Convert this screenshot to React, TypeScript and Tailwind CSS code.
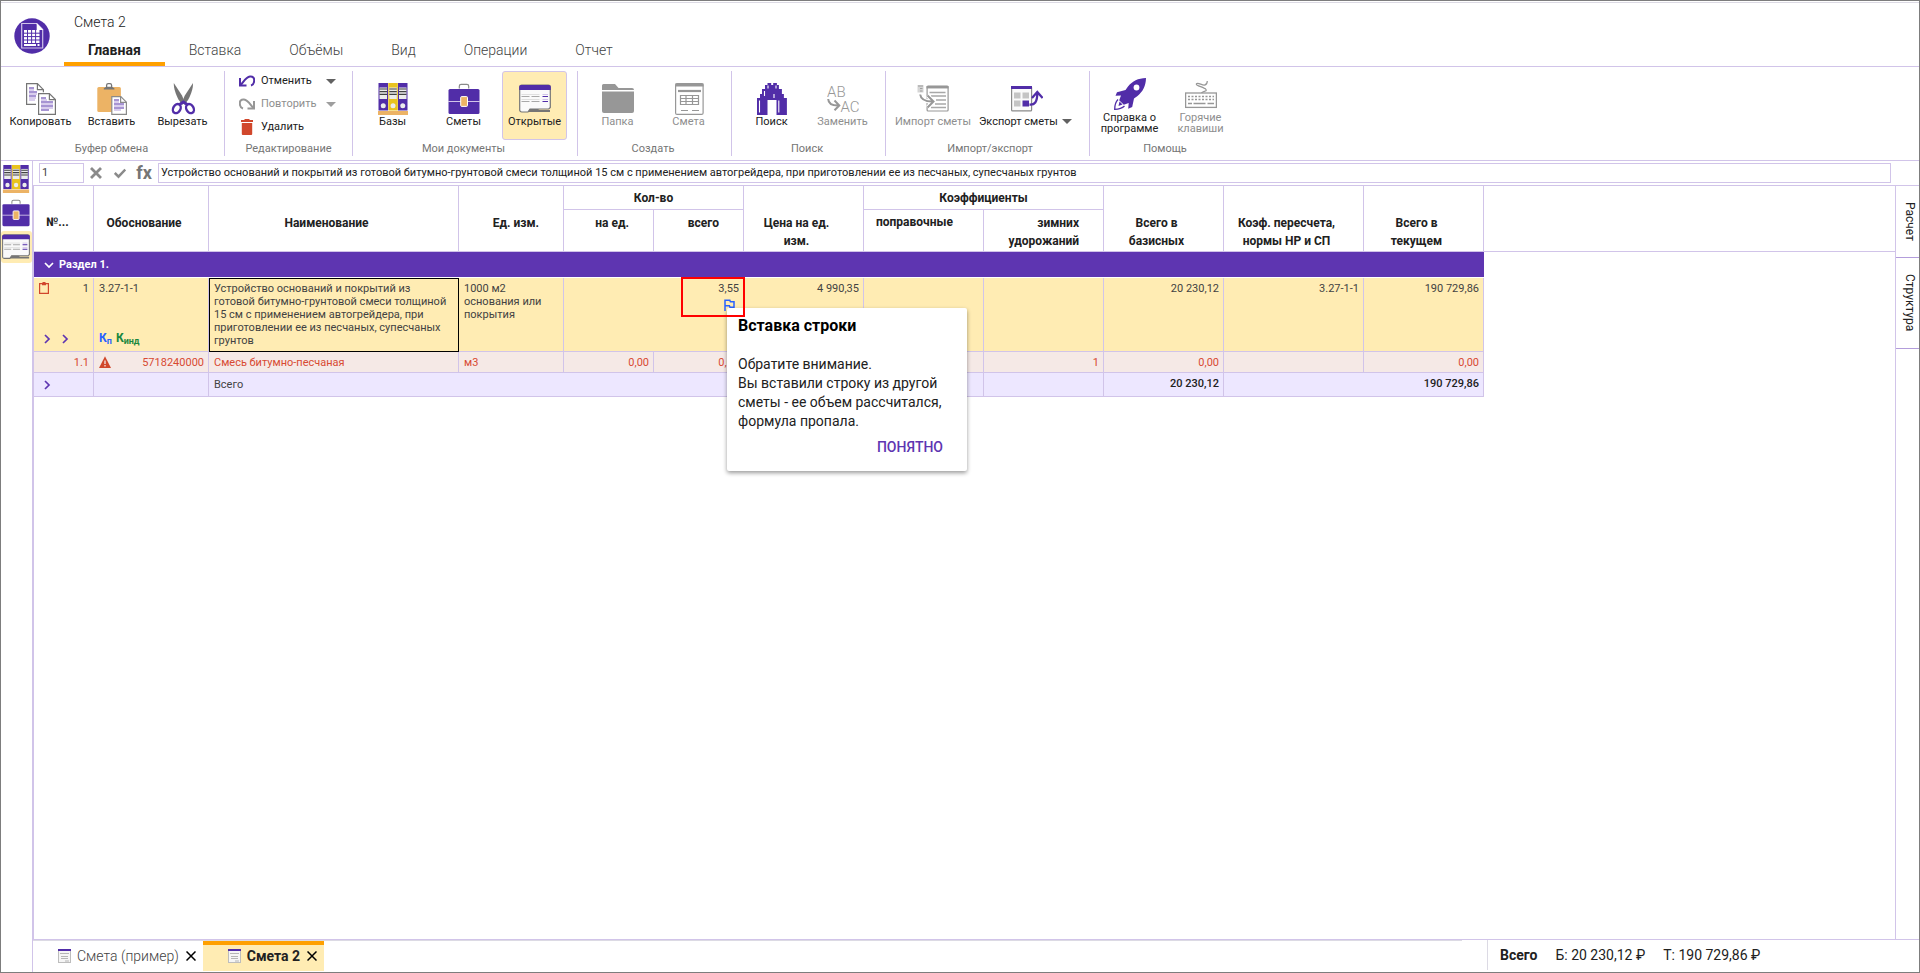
import { useState } from "react";
import type { ReactNode } from "react";
import clsx from "clsx";

const menuTabs = ["Главная", "Вставка", "Объёмы", "Вид", "Операции", "Отчет"];

const rowName =
  "Устройство оснований и покрытий из готовой битумно-грунтовой смеси толщиной 15 см с применением автогрейдера, при приготовлении ее из песчаных, супесчаных грунтов";

const columnWidths = [60, 115, 250, 105, 90, 90, 120, 120, 120, 120, 140, 120];

function LogoIcon() {
  return (
    <svg viewBox="0 0 36 36" className="size-9">
      <circle cx="18" cy="18" r="17.7" fill="#512da8" />
      <path d="M7.7 5.5h15l6 6v18.5h-21z" fill="none" stroke="#d1c4e9" strokeWidth="1.2" />
      <path d="M22.7 5l6.5 7h-6.5z" fill="#fff" />
      <rect x="10" y="12" width="15.5" height="13" fill="#fff" />
      <path
        d="M10 15.2h16M10 18.6h16M10 22h16M13.5 12v13M17.6 12v13M21.6 12v13"
        stroke="#512da8"
        strokeWidth="1"
      />
      <path d="M10 27h12M23.5 27h2" stroke="#fff" strokeWidth="2" />
    </svg>
  );
}

function CopyIcon() {
  return (
    <svg viewBox="0 0 32 32" className="size-8" fill="none">
      <path d="M11 21.3H1.6V.7h10.8l6 6v2.5" stroke="#757575" strokeWidth="1.2" />
      <path d="M12.4.7v6h6" stroke="#757575" strokeWidth="1.2" />
      <path d="M4 5h5M4 9h8M4 13h7" stroke="#512da8" strokeWidth="1.2" />
      <path d="M4 7h5M4 11h8M4 15h7M4 17h6" stroke="#b39ddb" strokeWidth="1.2" />
      <path d="M13.6 10.6h10.8l6 6v14.8H13.6z" fill="#fff" stroke="#757575" strokeWidth="1.2" />
      <path d="M24.4 10.6v6h6" stroke="#757575" strokeWidth="1.2" />
      <path d="M16 15h5M16 19h12M16 23h12M16 27h8" stroke="#512da8" strokeWidth="1.2" />
      <path d="M16 17h6M16 21h12M16 25h12" stroke="#b39ddb" strokeWidth="1.2" />
    </svg>
  );
}

function PasteIcon() {
  return (
    <svg viewBox="0 0 32 32" className="size-8" fill="none">
      <rect x="1.3" y="4" width="23.6" height="25" rx="1.5" fill="#ecb365" />
      <path d="M7.8 6.5V5.2l2.6-1.4h5.4l2.6 1.4v1.3z" fill="#757575" />
      <path d="M10.6 4.5V2.2A1.6 1.6 0 0 1 12.2.7h1.8a1.6 1.6 0 0 1 1.6 1.5v2.3" stroke="#757575" strokeWidth="1.3" />
      <path d="M15.8 13.6h9l5.6 5.6v12.2H15.8z" fill="#fff" stroke="#8a8a8a" strokeWidth="1.2" />
      <path d="M24.6 13.6v5.8h5.8" stroke="#8a8a8a" strokeWidth="1.2" />
      <path d="M18 17h5M18 21h10M18 25h10" stroke="#512da8" strokeWidth="1.2" />
      <path d="M18 19h5M18 23h10M18 27h7" stroke="#b39ddb" strokeWidth="1.2" />
    </svg>
  );
}

function CutIcon() {
  return (
    <svg viewBox="0 0 32 32" className="size-8" fill="none">
      <path d="M6.8 0l8.2 12.6 2.8 6.5-2.4 2.6-3.8-5C9.2 12 6.6 6 6.8 0z" fill="#757575" />
      <path d="M26 0l-8.2 12.6-2.8 6.5 2.4 2.6 3.8-5C23.6 12 26.2 6 26 0z" fill="#757575" />
      <ellipse cx="9.8" cy="25.6" rx="3.6" ry="4.8" transform="rotate(30 9.8 25.6)" stroke="#512da8" strokeWidth="2.4" />
      <ellipse cx="23" cy="25.6" rx="3.6" ry="4.8" transform="rotate(-30 23 25.6)" stroke="#512da8" strokeWidth="2.4" />
      <path d="M12.5 21.5l3.9-2.5 3.9 2.5" stroke="#512da8" strokeWidth="2.8" />
    </svg>
  );
}

function BooksIcon({ className = "size-8" }: { className?: string }) {
  return (
    <svg viewBox="0 0 32 32" className={className}>
      <rect x="1" y="28" width="30" height="4" fill="#ecb365" />
      <rect x="1.5" y="0" width="9.5" height="27.5" fill="#512da8" />
      <rect x="11.3" y="0" width="9.5" height="27.5" fill="#e9c31f" />
      <rect x="21" y="0" width="9.5" height="27.5" fill="#512da8" />
      {[2.5, 12.3, 22].map((x) => (
        <g key={x}>
          <rect x={x} y="4.5" width="7.5" height="11.5" fill="#ececec" />
          <path d={`M${x} 6h7.5M${x} 8.7h7.5M${x} 11.4h7.5`} stroke="#424242" strokeWidth="1.2" />
          <circle cx={x + 3.75} cy="22.8" r="2.5" fill="#ececec" />
        </g>
      ))}
    </svg>
  );
}

function CaseIcon({ className = "size-8" }: { className?: string }) {
  return (
    <svg viewBox="0 0 32 32" className={className} fill="none">
      <path d="M11.3 5.5V3.2a1.8 1.8 0 0 1 1.8-1.8h5.8a1.8 1.8 0 0 1 1.8 1.8v2.3" stroke="#8a8a8a" strokeWidth="1.2" />
      <rect x=".5" y="6" width="31" height="25" rx="1.5" fill="#512da8" />
      <path d="M0 18.5h32" stroke="#d1c4e9" strokeWidth="1" />
      <rect x="12.7" y="13.6" width="6.8" height="9.8" rx="1" fill="#ecb365" stroke="#fff" />
    </svg>
  );
}

function OpenIcon({ className = "size-8" }: { className?: string }) {
  return (
    <svg viewBox="0 0 32 32" className={className} fill="none">
      <path
        d="M.7 4a2 2 0 0 1 2-2h26.6a2 2 0 0 1 2 2v20.5l-1.5 1.5H11l-2 3H2.7a2 2 0 0 1-2-2z"
        fill="#fafafa"
        stroke="#757575"
        strokeWidth="1.2"
      />
      <path d="M.2 7V4a2 2 0 0 1 2-2h27.6a2 2 0 0 1 2 2v3z" fill="#512da8" />
      <path d="M2.5 13.5h8M12.5 13.5h8M2.5 18.5h8M12.5 18.5h8" stroke="#a8a8a8" strokeWidth="1.2" />
      <path d="M2.5 11.5h18M2.5 16.5h18" stroke="#e0e0e0" strokeWidth="1" />
      <path d="M23.5 13.5h5.5M23.5 18.5h5.5" stroke="#512da8" strokeWidth="1.2" />
      <path d="M23.5 11.5h5.5M23.5 16.5h5.5" stroke="#d1c4e9" strokeWidth="1" />
      <path d="M9 29l2-3h8l1.5 1H31v2z" fill="#757575" />
    </svg>
  );
}

function FolderIcon() {
  return (
    <svg viewBox="0 0 32 32" className="size-8">
      <path d="M0 7V2.5A1.5 1.5 0 0 1 1.5 1H13l3.5 4H30a2 2 0 0 1 2 2z" fill="#979797" />
      <path d="M0 8.5h32V28a2 2 0 0 1-2 2H2a2 2 0 0 1-2-2z" fill="#979797" />
    </svg>
  );
}

function SheetIcon() {
  return (
    <svg viewBox="0 0 32 32" className="size-8" fill="none" stroke="#979797" strokeWidth="1.2">
      <rect x="2.6" y=".6" width="27.5" height="30.8" rx="1.5" />
      <path d="M2.5 2h28" strokeWidth="3" />
      <path d="M5 8h23" strokeWidth="2.2" />
      <path d="M7.5 12.5h18v9h-18zM7.5 15.5h18M7.5 18.5h18M13 12.5v9M19.5 12.5v9" />
      <path d="M8 27.5h7M19 27.5h7" />
    </svg>
  );
}

function BinocularsIcon() {
  return (
    <svg viewBox="0 0 32 32" className="size-8">
      <path
        d="M11.5 0h3.7v2h2V0h3.7v2h2v4h3v5h2v4h3v17H20.5V17h-9v15H1V15h3v-4h2V6h3V2h2.5z"
        fill="#512da8"
      />
      <path
        d="M3.5 17.5v12M22.8 17.5v12M12 2.5v3M20 2.5v3M8.5 8v5M18 11v4"
        stroke="#fff"
        strokeWidth="1.1"
        fill="none"
      />
    </svg>
  );
}

function ReplaceIcon() {
  return (
    <svg viewBox="0 0 32 32" className="size-8" fill="none">
      <text x="0" y="13.5" fontSize="15" fontWeight="300" fill="#979797">
        AB
      </text>
      <text x="13.5" y="29" fontSize="15" fontWeight="300" fill="#979797">
        AC
      </text>
      <path d="M1.2 16c.2 4.5 3 6.8 10.5 6.6M7.5 17.5l4.8 5-4.8 4.8" stroke="#979797" strokeWidth="2" />
    </svg>
  );
}

function ImportIcon() {
  return (
    <svg viewBox="0 0 32 32" className="size-8" fill="none">
      <rect x="10.1" y="3" width="21" height="25" rx="1" stroke="#979797" strokeWidth="1.2" />
      <path d="M9.5 4.2h22" stroke="#979797" strokeWidth="2.5" />
      <path d="M12.5 9.5h16M14 13h15M19 17h10M18 21h11M14 24.5h15" stroke="#a8a8a8" strokeWidth="1.7" />
      <rect x=".5" y="2" width="6" height="7.5" fill="#d5d5d5" />
      <path d="M1 3h5M3 5.5h2.5M3 8h2.5" stroke="#a0a0a0" />
      <path d="M3.2 11.5c.5 4.5 3.5 7 12 7M10.5 12.5l6 6-6 6" stroke="#fff" strokeWidth="4" />
      <path d="M3.2 11.5c.5 4.5 3.5 7 12 7M10.5 12.5l6 6-6 6" stroke="#979797" strokeWidth="2" />
    </svg>
  );
}

function ExportIcon() {
  return (
    <svg viewBox="0 0 36 32" className="h-8 w-9" fill="none">
      <rect x="4.6" y="3.6" width="20" height="24.3" rx="1" fill="#fafafa" stroke="#8a8a8a" strokeWidth="1.2" />
      <path d="M4 4.5h21" stroke="#512da8" strokeWidth="3" />
      <path d="M7 9.5h6.5v6H7zM15.5 9.5H22v6h-6.500zM7 17.5h6.5v6H7z" fill="#c4c4c4" />
      <path d="M15.5 17.5H22v6h-6.5z" fill="#512da8" />
      <path d="M22.5 21.5c5 .5 7.8-2 7.8-11.5M25 15l5.300-6 5.300 6" stroke="#512da8" strokeWidth="2.3" />
    </svg>
  );
}

function RocketIcon() {
  return (
    <svg viewBox="0 0 32 32" className="size-8">
      <path
        d="M32 0c-8 .2-13.5 3-18 8.5L11.5 12 3 14.2l-1.5 3.6 5.5-.3-1.8 4.7 4.6 4.6 4.9-1.7-.5 5.7 4-1.8L20 20.500l3.500-2.600C29 13.500 31.800 8 32 0z"
        fill="#512da8"
      />
      <circle cx="22.5" cy="9.5" r="2.9" fill="#fff" />
      <path d="M4 21.5C1.5 24 .7 27 .7 31.3c4.3 0 7.3-.8 9.8-3.3" fill="none" stroke="#512da8" strokeWidth="1.3" />
      <path d="M5.5 23.5l3 3-4 1.5z" fill="#512da8" />
    </svg>
  );
}

function KeyboardIcon() {
  return (
    <svg viewBox="0 0 32 32" className="size-8" fill="none" stroke="#979797">
      <rect x=".6" y="15" width="30.8" height="14.4" strokeWidth="1.3" />
      <path
        d="M16.5 15c1-2 6-1.5 4.5-3.5-2-2.5-11-3.8-9.500-5.800 1.500-1.700 5.500 1.800 8 1.400 2-.4 2.800-2.100 2.800-4.100"
        strokeWidth="1.2"
      />
      <path d="M3 18.5h26M3 21.5h26" strokeWidth="1.5" strokeDasharray="2 1.5" />
      <path d="M3 25.5h4M8.5 25.5h12M22.5 25.5h6.5" strokeWidth="1.5" />
    </svg>
  );
}

function UndoIcon() {
  return (
    <svg viewBox="0 0 16 16" className="size-4" fill="none" stroke="#512da8" strokeWidth="2">
      <path d="M1 5v7.5h6.5" />
      <path d="M1.5 12C4 10 6.5 4 11 3.5c3-.3 4.3 1.5 4.2 4-.1 2.5-1.5 4.5-3.2 5" />
    </svg>
  );
}

function RedoIcon() {
  return (
    <svg viewBox="0 0 16 16" className="size-4" fill="none" stroke="#979797" strokeWidth="2">
      <path d="M15 5v7.5H8.5" />
      <path d="M14.5 12C12 10 9.5 4 5 3.5c-3-.3-4.3 1.5-4.2 4 .1 2.5 1.5 4.5 3.2 5" />
    </svg>
  );
}

function TrashIcon() {
  return (
    <svg viewBox="0 0 16 16" className="size-4" fill="#d1472c">
      <path d="M5.5 0h5v1H14v2H2V1h3.5zM2.8 4h10.4v11a1 1 0 0 1-1 1H3.8a1 1 0 0 1-1-1z" />
    </svg>
  );
}

function Chevron({ down = false }: { down?: boolean }) {
  return (
    <svg viewBox="0 0 10 10" className="size-2.5" fill="none" stroke="currentColor" strokeWidth="1.7">
      <path d={down ? "M1 3l4 4 4-4" : "M3 1l4 4-4 4"} />
    </svg>
  );
}

function Caret({ className = "fill-[#616161]" }: { className?: string }) {
  return (
    <svg viewBox="0 0 10 5" className={clsx("h-[5px] w-2.5 shrink-0", className)}>
      <path d="M0 0h10L5 5z" />
    </svg>
  );
}

function DocTabIcon() {
  return (
    <svg viewBox="0 0 13 14" className="h-3.5 w-[13px] shrink-0" fill="none">
      <rect x=".5" y=".5" width="12" height="13" fill="#f5f5f5" stroke="#bdbdbd" />
      <path d="M0 1h13" stroke="#512da8" strokeWidth="2" />
      <path d="M2 4.5h9M3 7.5h7M3 9.5h7M7 12h4" stroke="#b5b5b5" />
    </svg>
  );
}

function RibbonGroup({
  title,
  className,
  children,
}: {
  title: string;
  className?: string;
  children: ReactNode;
}) {
  return (
    <section className={clsx("flex shrink-0 flex-col", className)}>
      <div className="flex h-[69px]">{children}</div>
      <h2 className="mt-0.5 text-center text-[11px] leading-[14px] text-[#757575]">{title}</h2>
    </section>
  );
}

function RibbonButton({
  icon,
  label,
  disabled = false,
  active = false,
  caret = false,
  twoLines = false,
}: {
  icon: ReactNode;
  label: string;
  disabled?: boolean;
  active?: boolean;
  caret?: boolean;
  twoLines?: boolean;
}) {
  return (
    <button
      type="button"
      disabled={disabled}
      className={clsx(
        "mx-[3px] flex min-w-[65px] flex-col items-center justify-center rounded-[3px] border text-[11px]",
        active ? "border-[#d1c4e9] bg-[#ffecb3]" : "border-transparent",
        disabled ? "text-[#8e8e8e]" : "text-[#212121]",
        twoLines ? "w-[65px] leading-[11px]" : "leading-[14px] whitespace-nowrap",
      )}
    >
      {icon}
      <span className={clsx("flex items-center gap-1", twoLines && "mt-0.5")}>
        {label}
        {caret && <Caret />}
      </span>
    </button>
  );
}

function Cell({
  children,
  className,
  line = true,
  colSpan,
}: {
  children?: ReactNode;
  className?: string;
  line?: boolean;
  colSpan?: number;
}) {
  return (
    <td
      colSpan={colSpan}
      className={clsx("border-b border-[#d1c4e9] pr-1 pl-[5px] align-top", line && "border-r", className)}
    >
      {children}
    </td>
  );
}

function HeadCell({
  children,
  className = "pt-7 pr-6 pl-2.5 text-center",
  rowSpan,
  colSpan,
}: {
  children?: ReactNode;
  className?: string;
  rowSpan?: number;
  colSpan?: number;
}) {
  return (
    <th
      rowSpan={rowSpan}
      colSpan={colSpan}
      className={clsx("border-r border-b border-[#d1c4e9] align-top font-bold", className)}
    >
      {children}
    </th>
  );
}

function InsertNotice({ onClose }: { onClose: () => void }) {
  return (
    <div
      role="dialog"
      aria-labelledby="notice-title"
      className="absolute top-[30px] left-[73px] z-10 flex h-[163px] w-60 flex-col rounded-[2px] bg-white px-[11px] pt-2 text-left text-[#212121] shadow-[0_2px_4px_rgba(0,0,0,0.4)]"
    >
      <h3 id="notice-title" className="text-[16px] leading-5 font-bold text-black">
        Вставка строки
      </h3>
      <p className="mt-[19px] text-[14px] leading-[19px] whitespace-nowrap">
        Обратите внимание.
        <br />
        Вы вставили строку из другой
        <br />
        сметы - ее объем рассчитался,
        <br />
        формула пропала.
      </p>
      <button
        type="button"
        onClick={onClose}
        className="mt-1.5 mr-[13px] self-end text-[14px] leading-5 font-medium text-[#5e35b1]"
      >
        ПОНЯТНО
      </button>
    </div>
  );
}

function EstimateTable() {
  const [noticeOpen, setNoticeOpen] = useState(true);

  return (
    <table className="w-full table-fixed border-separate border-spacing-0 text-[11px] leading-[13px] text-[#424242]">
      <colgroup>
        {columnWidths.map((width, i) => (
          <col key={i} style={{ width }} />
        ))}
        <col />
      </colgroup>
      <thead className="text-[12px] leading-[18px] text-[#212121]">
        <tr className="h-6">
          <HeadCell rowSpan={2} className="pt-[27px] pl-3 text-left">№...</HeadCell>
          <HeadCell rowSpan={2}>Обоснование</HeadCell>
          <HeadCell rowSpan={2}>Наименование</HeadCell>
          <HeadCell rowSpan={2} className="pt-7 pr-6 text-right">Ед. изм.</HeadCell>
          <HeadCell colSpan={2} className="pt-[3px] text-center">Кол-во</HeadCell>
          <HeadCell rowSpan={2}>Цена на ед. изм.</HeadCell>
          <HeadCell colSpan={2} className="pt-[3px] text-center">Коэффициенты</HeadCell>
          <HeadCell rowSpan={2}>Всего в базисных</HeadCell>
          <HeadCell rowSpan={2}>Коэф. пересчета, нормы НР и СП</HeadCell>
          <HeadCell rowSpan={2}>Всего в текущем</HeadCell>
          <td rowSpan={2} className="border-b border-[#d1c4e9]" />
        </tr>
        <tr className="h-[42px]">
          <HeadCell className="pt-1 pr-6 text-right">на ед.</HeadCell>
          <HeadCell className="pt-1 pr-6 text-right">всего</HeadCell>
          <HeadCell className="pt-[3px] pl-3 text-left">поправочные</HeadCell>
          <HeadCell className="pt-1 pr-6 text-right">зимних удорожаний</HeadCell>
        </tr>
      </thead>
      <tbody>
        <tr className="h-[26px] bg-[#5e35b1]">
          <td colSpan={12} className="border-b border-white bg-[#5e35b1] pl-2.5 text-[11px] font-bold text-white">
            <span className="flex items-center gap-[5px]">
              <Chevron down />
              Раздел 1.
            </span>
          </td>
          <td className="bg-white" />
        </tr>
        <tr className="h-[74px] bg-[#ffecb3]">
          <Cell className="h-[74px] pt-1">
            <div className="flex h-[62px] flex-col justify-between">
              <div className="flex justify-between">
                <svg viewBox="0 0 10 12" className="h-3 w-2.5" fill="none" stroke="#d1472c">
                  <path d="M.6 1.6h8.8v9.8H.6z" strokeWidth="1.2" />
                  <path d="M3 2.5h4M3.5.6h3" strokeWidth="1.5" />
                </svg>
                1
              </div>
              <div className="flex gap-2 pl-[3px] text-[#5e35b1]">
                <Chevron />
                <Chevron />
              </div>
            </div>
          </Cell>
          <Cell className="pt-1">
            <div className="flex h-[63px] flex-col justify-between">
              3.27-1-1
              <div className="flex gap-1 text-[12px] font-bold">
                <span className="text-[#2962ff]">
                  К<sub className="text-[9px]">п</sub>
                </span>
                <span className="text-[#1b873f]">
                  К<sub className="text-[9px]">инд</sub>
                </span>
              </div>
            </div>
          </Cell>
          <td className="border border-black px-1 pt-[3px] align-top">{rowName}</td>
          <Cell className="pt-1">1000 м2 основания или покрытия</Cell>
          <Cell line={false} />
          <Cell className="relative pt-1 text-right">
            3,55
            <svg viewBox="0 0 11 12" className="mt-1 mr-1 ml-auto h-3 w-[11px]" fill="none" stroke="#2962ff" strokeWidth="1.5">
              <path d="M1 12V1.2h4.8l.6 1.6h3.6v5.5H6l-.6-1.5H1" />
            </svg>
            {noticeOpen && <InsertNotice onClose={() => setNoticeOpen(false)} />}
            <span className="absolute -top-px left-[27px] z-20 h-10 w-16 border-2 border-[#ff0000]" />
          </Cell>
          <Cell className="pt-1 text-right">4 990,35</Cell>
          <Cell />
          <Cell />
          <Cell className="pt-1 text-right">20 230,12</Cell>
          <Cell className="pt-1 text-right">3.27-1-1</Cell>
          <Cell className="pt-1 text-right">190 729,86</Cell>
          <td className="bg-white" />
        </tr>
        <tr className="h-[21px] bg-[#f5e9e6] text-[#d84a32]">
          <Cell className="pt-1 text-right">1.1</Cell>
          <Cell className="pt-1">
            <div className="flex justify-between">
              <svg viewBox="0 0 12 12" className="size-3">
                <path d="M6 .3L12 12H0z" fill="#d1472c" />
                <path d="M6 4.5v3.5M6 9v1.5" stroke="#f5e9e6" strokeWidth="1.3" />
              </svg>
              5718240000
            </div>
          </Cell>
          <Cell className="pt-1">Смесь битумно-песчаная</Cell>
          <Cell className="pt-1">м3</Cell>
          <Cell className="pt-1 text-right">0,00</Cell>
          <Cell className="pt-1 text-right">0,00</Cell>
          <Cell />
          <Cell />
          <Cell className="pt-1 text-right">1</Cell>
          <Cell className="pt-1 text-right">0,00</Cell>
          <Cell />
          <Cell className="pt-1 text-right">0,00</Cell>
          <td className="bg-white" />
        </tr>
        <tr className="h-6 bg-[#ede7ff]">
          <Cell className="pt-[7px]">
            <div className="pl-[3px] text-[#5e35b1]">
              <Chevron />
            </div>
          </Cell>
          <Cell />
          <Cell colSpan={6} className="pt-[5px]">Всего</Cell>
          <Cell />
          <Cell className="pt-1 text-right font-medium text-[#212121]">20 230,12</Cell>
          <Cell line={false} />
          <Cell className="pt-1 text-right font-medium text-[#212121]">190 729,86</Cell>
          <td className="bg-white" />
        </tr>
      </tbody>
    </table>
  );
}

function DocumentTab({ title, active = false }: { title: string; active?: boolean }) {
  return (
    <div
      className={clsx(
        "flex items-center border-t-4 pr-[7px] pb-1 pl-[25px] text-[14px]",
        active ? "border-[#ffa000] bg-[#ffecb3] font-bold text-[#212121]" : "border-transparent font-light text-[#424242]",
      )}
    >
      <DocTabIcon />
      <button type="button" className="mr-[7px] ml-1.5">
        {title}
      </button>
      <button type="button" aria-label={`Закрыть ${title}`}>
        <svg viewBox="0 0 10 10" className="size-2.5" stroke="#000" strokeWidth="1.5">
          <path d="M.5.5l9 9M9.5.5l-9 9" />
        </svg>
      </button>
    </div>
  );
}

export default function App() {
  const [activeTab, setActiveTab] = useState("Главная");
  const [formula, setFormula] = useState(rowName);

  return (
    <div className="flex h-screen flex-col border border-[#7d7d7d] bg-white font-['Roboto',sans-serif] text-[#212121]">
      <header className="mt-px flex border-y border-t-[#dcdae4] border-b-[#d1c4e9] pl-[13px]">
        <div className="mr-[14px] pt-[15px]">
          <LogoIcon />
        </div>
        <div className="h-[63px]">
          <h1 className="pt-2 pl-2.5 text-[14px] leading-[22px] font-light">Смета 2</h1>
          <nav className="mt-px flex h-8 font-light">
            {menuTabs.map((tab) => (
              <button
                key={tab}
                type="button"
                onClick={() => setActiveTab(tab)}
                className={clsx(
                  "border-b-4 px-6 pt-1 text-[14px]",
                  tab === activeTab ? "border-[#ffa000] font-bold" : "border-transparent text-[#424242]",
                )}
              >
                {tab}
              </button>
            ))}
          </nav>
        </div>
      </header>

      <div className="flex divide-x divide-[#d1c4e9] border-b border-[#d1c4e9] py-1">
        <RibbonGroup title="Буфер обмена" className="pr-1.5 pl-1">
          <RibbonButton icon={<CopyIcon />} label="Копировать" />
          <RibbonButton icon={<PasteIcon />} label="Вставить" />
          <RibbonButton icon={<CutIcon />} label="Вырезать" />
        </RibbonGroup>
        <RibbonGroup title="Редактирование" className="w-32">
          <div className="flex w-full flex-col gap-[3px] pr-4 pl-3.5 text-[11px]">
            <button type="button" className="flex h-5 items-center gap-1.5">
              <UndoIcon />
              Отменить
              <span className="ml-auto">
                <Caret />
              </span>
            </button>
            <button type="button" disabled className="flex h-5 items-center gap-1.5 text-[#8e8e8e]">
              <RedoIcon />
              Повторить
              <span className="ml-auto">
                <Caret className="fill-[#9e9e9e]" />
              </span>
            </button>
            <button type="button" className="flex h-5 items-center gap-1.5">
              <TrashIcon />
              Удалить
            </button>
          </div>
        </RibbonGroup>
        <RibbonGroup title="Мои документы" className="pr-[7px] pl-1">
          <RibbonButton icon={<BooksIcon />} label="Базы" />
          <RibbonButton icon={<CaseIcon />} label="Сметы" />
          <RibbonButton icon={<OpenIcon />} label="Открытые" active />
        </RibbonGroup>
        <RibbonGroup title="Создать" className="pr-[7px] pl-1">
          <RibbonButton icon={<FolderIcon />} label="Папка" disabled />
          <RibbonButton icon={<SheetIcon />} label="Смета" disabled />
        </RibbonGroup>
        <RibbonGroup title="Поиск" className="pr-[7px] pl-1">
          <RibbonButton icon={<BinocularsIcon />} label="Поиск" />
          <RibbonButton icon={<ReplaceIcon />} label="Заменить" disabled />
        </RibbonGroup>
        <RibbonGroup title="Импорт/экспорт" className="w-[204px] pl-[5px]">
          <RibbonButton icon={<ImportIcon />} label="Импорт сметы" disabled />
          <RibbonButton icon={<ExportIcon />} label="Экспорт сметы" caret />
        </RibbonGroup>
        <RibbonGroup title="Помощь" className="pr-[7px] pl-1">
          <RibbonButton icon={<RocketIcon />} label="Справка о программе" twoLines />
          <RibbonButton icon={<KeyboardIcon />} label="Горячие клавиши" disabled twoLines />
        </RibbonGroup>
      </div>

      <div className="flex min-h-0 flex-1">
        <aside className="flex w-8 shrink-0 flex-col gap-0.5 border-r border-[#d1c4e9] pt-0.5">
          <button type="button" aria-label="Базы" className="flex h-8 items-center pl-px">
            <BooksIcon className="size-7" />
          </button>
          <button type="button" aria-label="Сметы" className="flex h-8 items-center pl-px">
            <CaseIcon className="size-7" />
          </button>
          <button
            type="button"
            aria-label="Открытые"
            className="flex h-8 items-center rounded-[3px] bg-[#ffecb3] pl-px"
          >
            <OpenIcon className="size-7" />
          </button>
        </aside>

        <main className="flex min-w-0 flex-1 flex-col">
          <div className="flex items-center border-b border-[#d1c4e9] py-0.5 pr-7 pl-1.5">
            <input
              aria-label="Номер строки"
              defaultValue="1"
              className="h-5 w-[45px] border border-[#d1c4e9] px-0.5 pb-0.5 text-[11px] text-[#424242]"
            />
            <button type="button" aria-label="Отмена" className="ml-1.5">
              <svg viewBox="0 0 12 12" className="size-3" stroke="#8a8a8a" strokeWidth="2.8">
                <path d="M1 1l10 10M11 1L1 11" />
              </svg>
            </button>
            <button type="button" aria-label="Применить" className="ml-3">
              <svg viewBox="0 0 12 12" className="size-3" fill="none" stroke="#8a8a8a" strokeWidth="2.5">
                <path d="M.8 6l3.7 3.7L11.3 2.5" />
              </svg>
            </button>
            <button type="button" className="ml-2.5 w-4 text-[18px] leading-5 font-bold text-[#757575]">
              fx
            </button>
            <input
              aria-label="Значение ячейки"
              value={formula}
              onChange={(event) => setFormula(event.target.value)}
              className="ml-1.5 h-5 min-w-0 flex-1 border border-[#d1c4e9] px-0.5 pb-0.5 text-[11px]"
            />
          </div>

          <div className="flex min-h-0 flex-1">
            <div className="min-w-0 flex-1 border-x border-[#d1c4e9]">
              <EstimateTable />
            </div>
            <div className="flex w-[23px] shrink-0 flex-col text-[12px]">
              <button type="button" className="h-[72px] border-b border-[#b39ddb] pl-1 [writing-mode:vertical-rl]">
                Расчет
              </button>
              <button type="button" className="h-[91px] border-b border-[#b39ddb] pl-1 [writing-mode:vertical-rl]">
                Структура
              </button>
            </div>
          </div>

          <footer className="flex h-[33px] border-t border-[#d1c4e9]">
            <div className="mr-[25px] mb-px flex flex-1 border-t border-[#dcdae4]">
              <DocumentTab title="Смета (пример)" />
              <DocumentTab title="Смета 2" active />
            </div>
            <div className="mb-0.5 flex w-[432px] shrink-0 items-center border-l border-[#dcdae4] pl-3 text-[14px]">
              <span className="font-bold">Всего</span>
              <span className="ml-[18px]">Б: 20 230,12 ₽</span>
              <span className="ml-[18px]">Т: 190 729,86 ₽</span>
            </div>
          </footer>
        </main>
      </div>
    </div>
  );
}
